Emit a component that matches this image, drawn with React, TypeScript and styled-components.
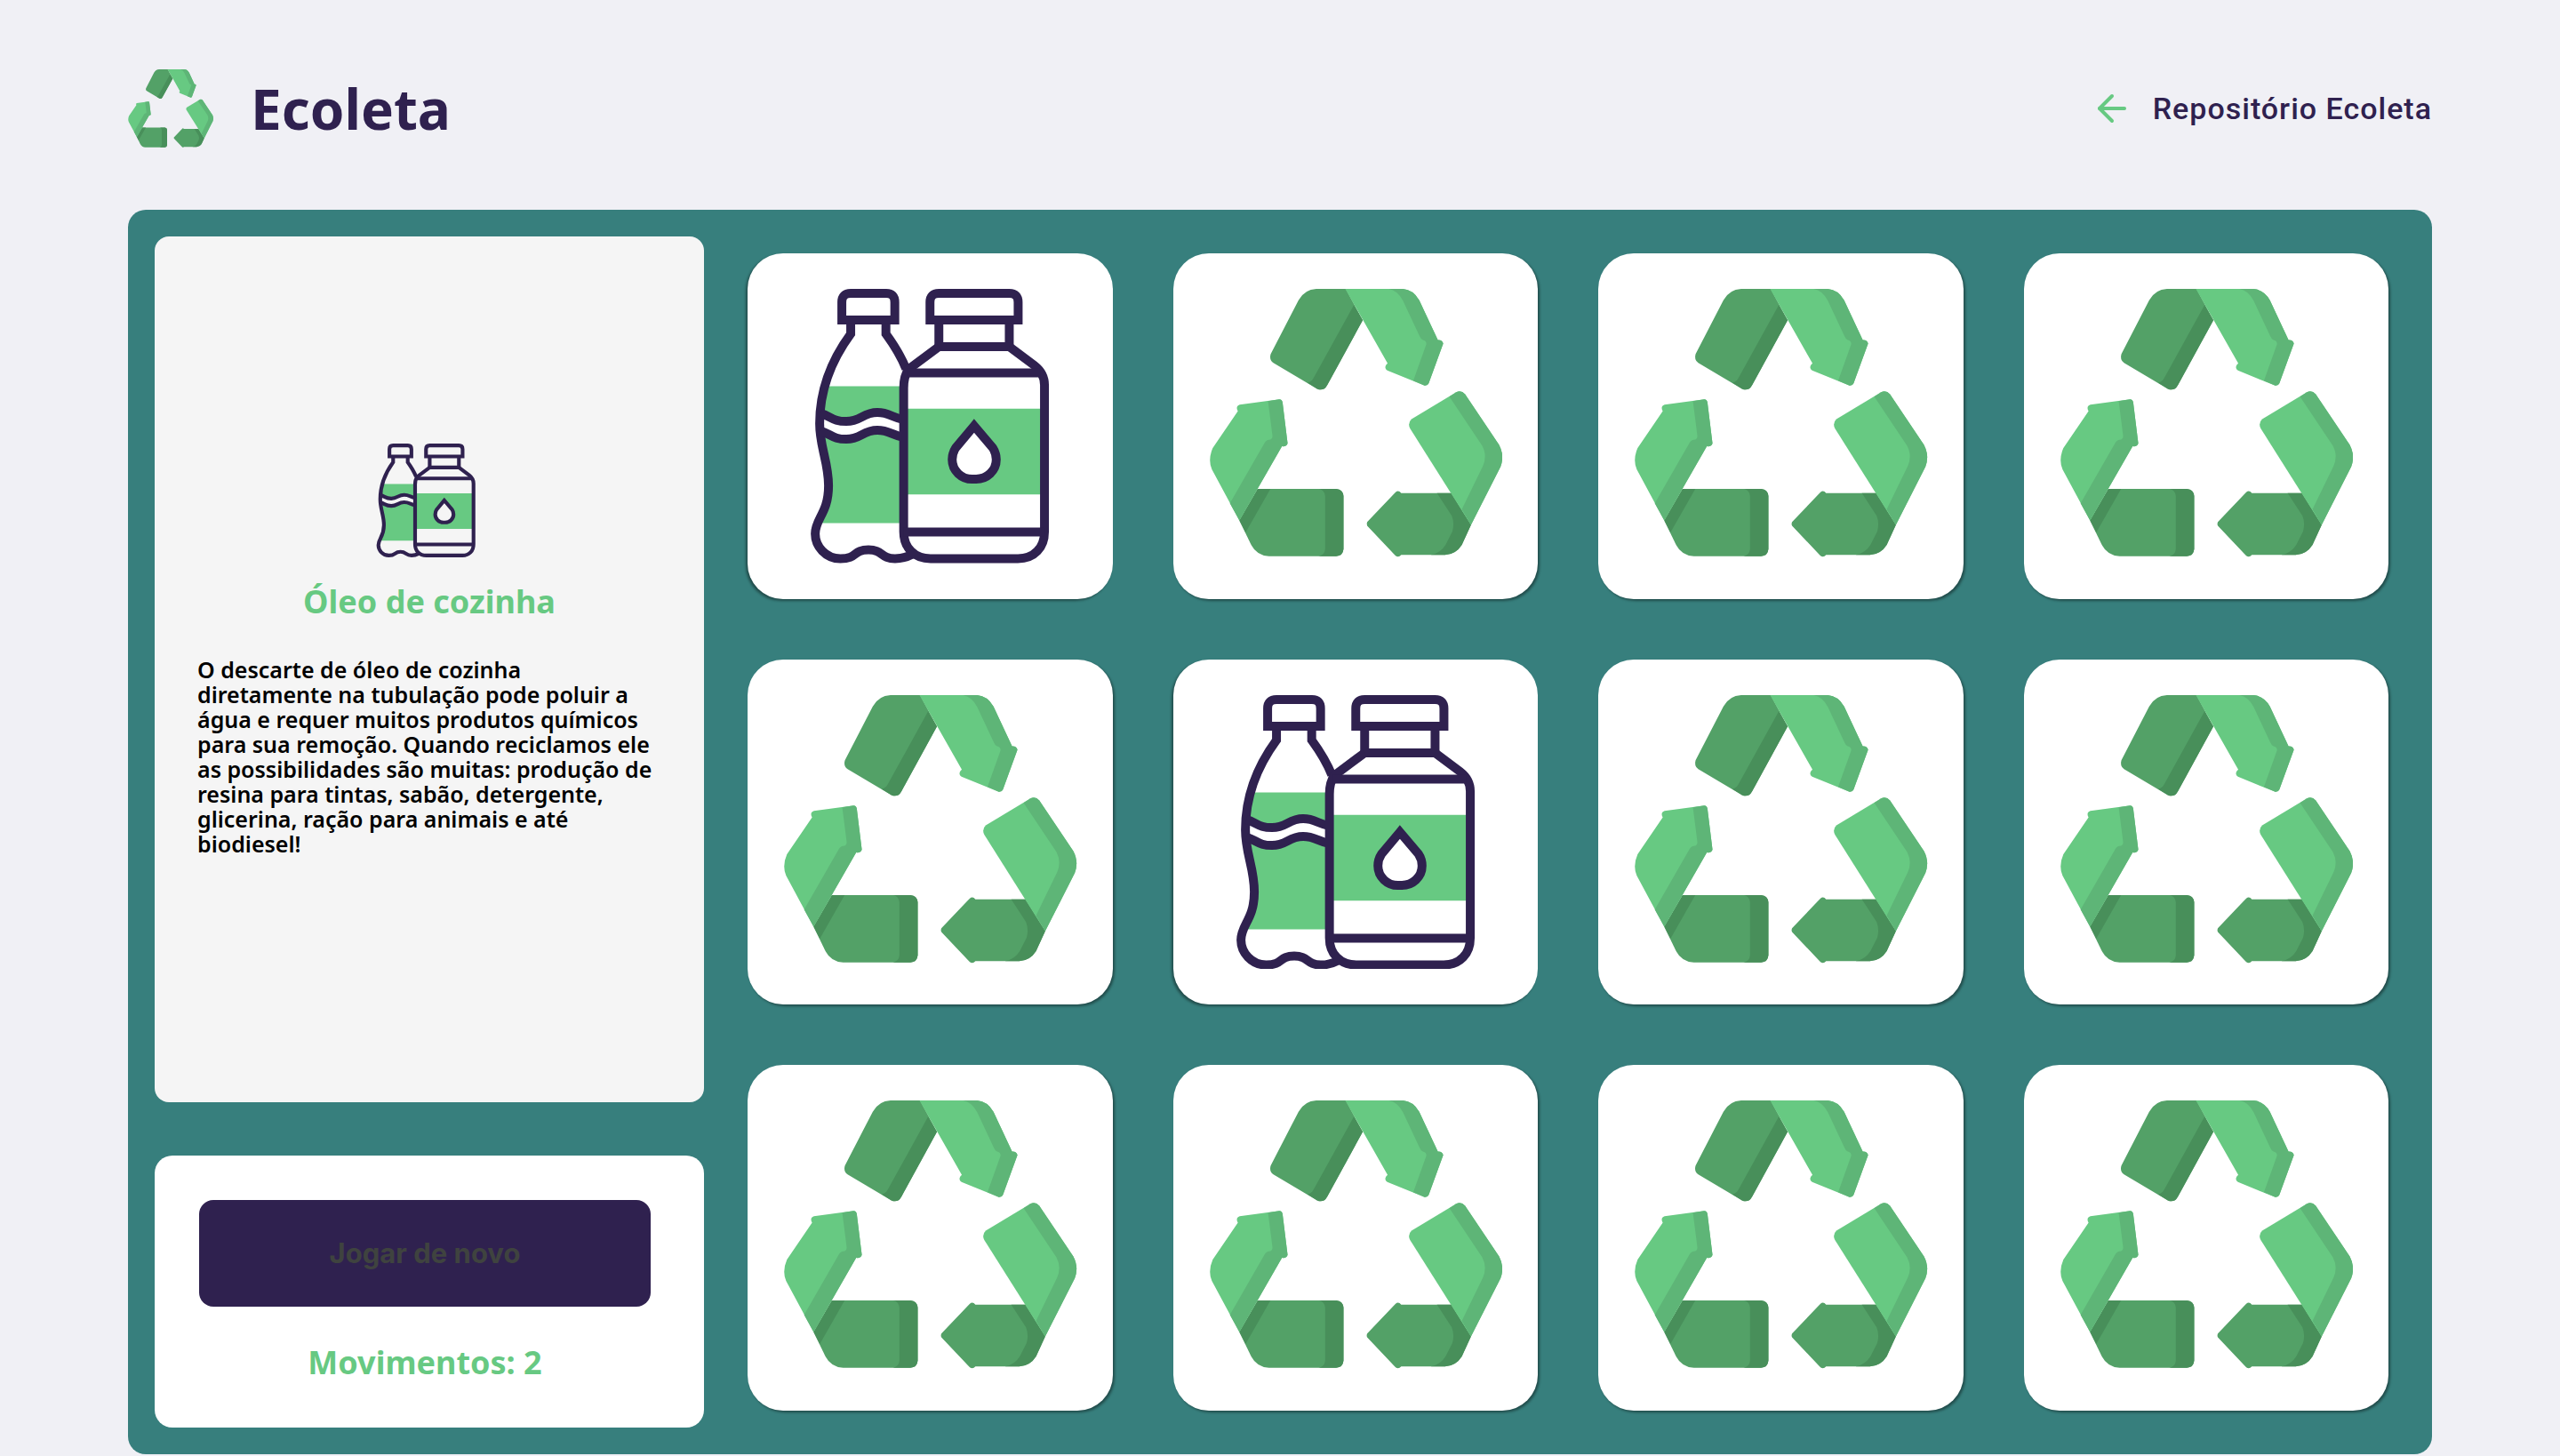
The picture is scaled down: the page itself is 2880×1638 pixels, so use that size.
import React from "react";
import styled, { createGlobalStyle } from "styled-components";
import { FiArrowLeft } from "react-icons/fi";

const purple = "#2f214f";
const green = "#67c982";
const heading = `"Noto Sans", "Open Sans", sans-serif`;

const GlobalStyle = createGlobalStyle`
  * { box-sizing: border-box; margin: 0; padding: 0; }
  body { background: #f0f0f5; font-family: ${heading}; -webkit-font-smoothing: antialiased; }
  button { border: 0; font: inherit; cursor: pointer; }
  svg { display: block; }
`;

const Page = styled.div`
  padding: 0 5%;
`;

const Header = styled.header`
  display: flex;
  align-items: center;
  justify-content: space-between;
  padding: 78px 0 70px;
`;

const Brand = styled.div`
  display: flex;
  align-items: center;
  gap: 42px;
  height: 88px;

  svg { width: 96px; height: 88px; }
`;

const BrandName = styled.h1`
  color: ${purple};
  font-size: 62px;
  font-weight: 700;
  line-height: 88px;
`;

const RepoLink = styled.a`
  display: flex;
  align-items: center;
  gap: 22px;
  color: ${purple};
  font-family: Roboto, sans-serif;
  font-size: 34px;
  font-weight: 500;
  letter-spacing: 1px;
  text-decoration: none;

  svg { color: ${green}; }
`;

const Board = styled.main`
  display: grid;
  grid-template-columns: 1fr 3fr;
  border-radius: 20px;
  background: #377f7d;
`;

const Sidebar = styled.aside`
  display: flex;
  flex-direction: column;
  gap: 60px;
  padding: 30px 0 30px 30px;
`;

const InfoPanel = styled.section`
  flex: 1;
  display: flex;
  flex-direction: column;
  align-items: center;
  justify-content: center;
  padding: 0 48px;
  border-radius: 16px;
  background: #f5f5f5;

  svg { width: 120px; height: 128px; }
`;

const InfoTitle = styled.h2`
  margin: 27px 0 39px;
  color: ${green};
  font-size: 36px;
  font-weight: 700;
  line-height: 46px;
`;

const InfoText = styled.p`
  align-self: stretch;
  margin-bottom: 44px;
  color: #000;
  font-size: 25px;
  font-weight: 600;
  line-height: 28px;
`;

const StatusPanel = styled.section`
  display: flex;
  flex-direction: column;
  gap: 40px;
  padding: 50px 60px 50px 50px;
  border-radius: 20px;
  background: #fff;
`;

const ReplayButton = styled.button`
  height: 120px;
  border-radius: 16px;
  background: ${purple};
  color: #3f433f;

  && {
    font-family: Inter, sans-serif;
    font-size: 31px;
    font-weight: 700;
  }
`;

const Moves = styled.p`
  color: ${green};
  font-size: 36px;
  font-weight: 700;
  line-height: 46px;
  text-align: center;
`;

const CardGrid = styled.div`
  display: grid;
  grid-template-columns: repeat(4, 1fr);
  gap: 68px;
  padding: 49px;
`;

const Card = styled.button<{ $flipped: boolean }>`
  aspect-ratio: 411 / 389;
  padding: 40px;
  border-radius: 40px;
  background: #fff;
  box-shadow: ${(p) => (p.$flipped ? "-2px" : "2px")} 2px 3px rgba(0, 0, 0, 0.4);

  svg { width: 100%; height: 100%; }
`;

function RecycleIcon({ viewBox = "177 165 993 927" }: { viewBox?: string }) {
  return (
    <svg viewBox={viewBox} aria-hidden="true">
      <g fill="#53a167">
        <path d="M540 165H640L697 271L577 490Q565 512 543 503L395 415Q380 405 386 385L480 203Q500 167 540 165Z" />
        <path d="M342 841H607Q630 843 632 865V1045Q630 1068 607 1069H380Q338 1065 320 1030L280 948Z" />
        <path d="M808 852Q818 844 827 855H996L1063 963L1032 1030Q1012 1062 975 1064H827Q818 1075 808 1067L712 966Q709 960 712 953Z" />
      </g>
      <g fill="#488f5a">
        <path d="M667 220L697 271L577 490Q565 512 543 503L510 482Q522 481 530 468Z" />
        <path d="M342 841H385L301 988L280 948Z" />
        <path d="M550 841H607Q630 843 632 865V1045Q630 1068 607 1069H548Q568 1066 570 1045V865Q568 845 550 841Z" />
        <path d="M948 855H996L1063 963L1032 1030Q1012 1062 975 1064H927Q960 1058 977 1030L1000 985Q1008 958 998 932Z" />
      </g>
      <g fill={green}>
        <path d="M638 165H833Q868 168 888 203L951 338Q966 337 969 350L920 484Q916 493 906 492L780 441Q769 433 776 422L781 417Z" />
        <path d="M281 556L415 538Q425 539 426 549L443 687Q440 699 424 697L280 948L187 775Q173 742 190 703L275 578Q266 562 281 556Z" />
        <path d="M862 605L1013 514Q1030 506 1043 521L1158 692Q1177 728 1163 766L1063 963L857 637Q848 618 862 605Z" />
      </g>
      <g fill="#5eb577">
        <path d="M785 165H833Q868 168 888 203L951 338Q966 337 969 350L920 484Q916 493 906 492L868 475L912 352Q913 340 899 337Q893 333 889 324L833 205Q815 170 785 165Z" />
        <path d="M377 544L415 538Q425 539 426 549L443 687Q440 699 424 697L280 948L248 890L365 686Q372 675 380 675Q392 674 392 662Z" />
        <path d="M990 529L1013 514Q1030 506 1043 521L1158 692Q1177 728 1163 766L1063 963L1032 910L1104 762Q1118 728 1101 695Z" />
      </g>
    </svg>
  );
}

function OilIcon({ viewBox = "183 165 990 927" }: { viewBox?: string }) {
  return (
    <svg viewBox={viewBox} aria-hidden="true">
      <g fill={green}>
        <path d="M328 494H589V607C550 600 540 583 500 583C445 583 450 613 395 613C350 613 345 597 308 587Q310 540 328 494Z" />
        <path d="M308 647C345 657 350 673 395 673C445 673 450 643 500 643C540 643 550 660 589 667V957H308C335 905 335 870 335 830C335 750 312 710 308 647Z" />
        <path
          fillRule="evenodd"
          d="M589 570H1065V860H589ZM827 628L765 702Q753 720 753 742C753 780 785 808 820 808H834C870 808 902 780 902 742Q902 720 890 702Z"
        />
      </g>
      <g fill="none" stroke={purple} strokeWidth="30">
        <path d="M380 270V210Q380 180 410 180H530Q559 180 559 210V270Z" />
        <path d="M410 280V317Q305 460 305 620C305 700 335 750 335 830C335 925 290 940 290 993C290 1035 325 1077 375 1077C435 1077 415 1047 470 1047C520 1047 510 1077 560 1077Q590 1077 618 1062" />
        <path d="M529 280V317Q575 380 597 435" />
        <path d="M308 585C345 597 350 613 395 613C445 613 450 583 500 583C540 583 550 600 589 607" />
        <path d="M308 645C345 657 350 673 395 673C445 673 450 643 500 643C540 643 550 660 589 667" />
        <path d="M678 270V210Q678 180 708 180H946Q976 180 976 210V270Z" />
        <path d="M708 280V360H946V280" />
        <path d="M708 360L606 436Q589 460 589 500V985C589 1040 625 1077 680 1077H975C1030 1077 1065 1040 1065 985V490Q1065 450 1030 423L946 360" />
        <path d="M600 449H1052" />
        <path d="M589 987H1065" />
        <path d="M827 628L765 702Q753 720 753 742C753 780 785 808 820 808H834C870 808 902 780 902 742Q902 720 890 702Z" />
      </g>
    </svg>
  );
}

const flippedCards = [0, 5];
const cards = Array.from({ length: 12 }, (_, index) => flippedCards.includes(index));

export default function App() {
  return (
    <>
      <GlobalStyle />
      <Page>
        <Header>
          <Brand>
            <RecycleIcon viewBox="178 165 991 906" />
            <BrandName>Ecoleta</BrandName>
          </Brand>
          <RepoLink href="#repositorio">
            <FiArrowLeft size={48} />
            Repositório Ecoleta
          </RepoLink>
        </Header>
        <Board>
          <Sidebar>
            <InfoPanel>
              <OilIcon viewBox="275 165 860 927" />
              <InfoTitle>Óleo de cozinha</InfoTitle>
              <InfoText>
                O descarte de óleo de cozinha diretamente na tubulação pode poluir a água e requer
                muitos produtos químicos para sua remoção. Quando reciclamos ele as possibilidades
                são muitas: produção de resina para tintas, sabão, detergente, glicerina, ração para
                animais e até biodiesel!
              </InfoText>
            </InfoPanel>
            <StatusPanel>
              <ReplayButton type="button">Jogar de novo</ReplayButton>
              <Moves>Movimentos: 2</Moves>
            </StatusPanel>
          </Sidebar>
          <CardGrid>
            {cards.map((flipped, index) => (
              <Card key={index} type="button" $flipped={flipped} aria-label={`Carta ${index + 1}`}>
                {flipped ? <OilIcon /> : <RecycleIcon />}
              </Card>
            ))}
          </CardGrid>
        </Board>
      </Page>
    </>
  );
}
